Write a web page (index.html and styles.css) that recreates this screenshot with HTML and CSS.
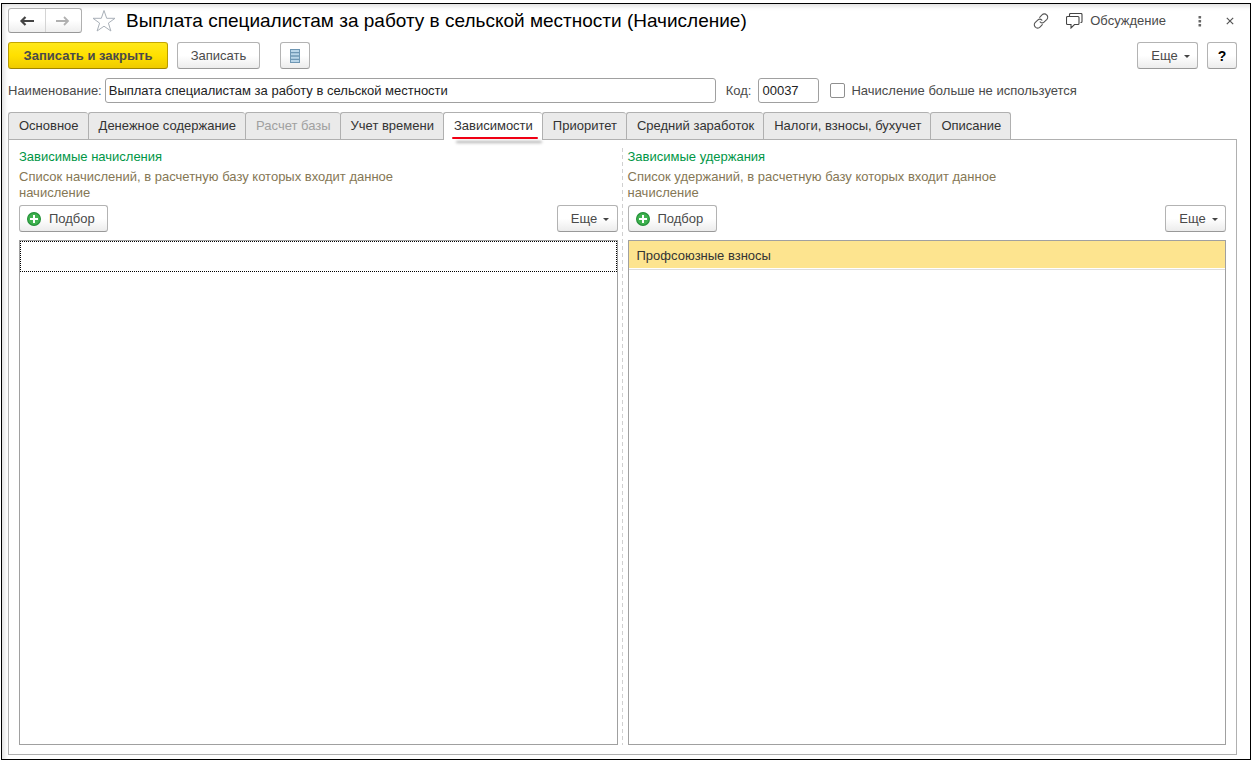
FILE: index.html
```html
<!DOCTYPE html>
<html lang="ru">
<head>
<meta charset="utf-8">
<title>Выплата специалистам за работу в сельской местности (Начисление)</title>
<link rel="stylesheet" href="styles.css">
</head>
<body>
<main class="window">
  <header class="titlebar">
    <div class="history">
      <button class="history-btn" type="button" aria-label="Назад"><svg width="16" height="12" viewBox="0 0 16 12"><path d="M15 6H3M6.500 2 2.500 6 6.500 10" fill="none" stroke="#444" stroke-width="2.200"/></svg></button>
      <button class="history-btn" type="button" aria-label="Вперед"><svg width="16" height="12" viewBox="0 0 16 12"><path d="M1 6h12M9 2 13 6 9 10" fill="none" stroke="#b0b0b0" stroke-width="1.800"/></svg></button>
    </div>
    <button class="icon-btn star" type="button" aria-label="В избранное"><svg width="24" height="24" viewBox="0 0 24 24"><path d="M12 1.500 14.700 9.300H23L16.400 14.100 18.900 22 12 17.200 5.100 22 7.600 14.100 1 9.300H9.300Z" fill="#fff" stroke="#a9b0b8"/></svg></button>
    <h1 class="title">Выплата специалистам за работу в сельской местности (Начисление)</h1>
    <button class="icon-btn link" type="button" aria-label="Получить ссылку"><svg width="16" height="16" viewBox="0 0 16 16" fill="none" stroke="#555" stroke-width="1.100" stroke-linecap="round"><path d="M6.700 4.300 9 2a3 3 0 0 1 4.700 0 3 3 0 0 1 .2 4.300L11.300 8.900a3 3 0 0 1-4.200 0"/><path d="M9.300 11.700 7 14a3 3 0 0 1-4.700 0 3 3 0 0 1-.2-4.300L4.700 7.100a3 3 0 0 1 4.200 0"/></svg></button>
    <button class="icon-btn discuss" type="button"><svg width="17" height="16" viewBox="0 0 17 16" fill="none" stroke="#444" stroke-width="1.100"><path d="M3.500 3V1.500q0-1 1-1h10.500q1 0 1 1v7q0 1-1 1H14.500"/><path d="M1.500 3.500h10.500q1 0 1 1v6q0 1-1 1H8.500L5 15V11.500H1.500q-1 0-1-1v-6q0-1 1-1Z"/></svg>Обсуждение</button>
    <button class="icon-btn dots" type="button" aria-label="Дополнительно"><svg width="4" height="13" viewBox="0 0 4 13" fill="#666"><rect x=".5" y="2" width="2.600" height="2.600" rx=".6"/><rect x=".5" y="6" width="2.600" height="2.600" rx=".6"/><rect x=".5" y="10" width="2.600" height="2.600" rx=".6"/></svg></button>
    <button class="icon-btn" type="button" aria-label="Закрыть"><svg width="8" height="8" viewBox="0 0 8 8"><path d="m.8.8 6.400 6.400M7.200.8.8 7.200" stroke="#555" stroke-width="1.200"/></svg></button>
  </header>

  <div class="commands">
    <button class="btn primary" type="button">Записать и закрыть</button>
    <button class="btn save" type="button">Записать</button>
    <button class="btn square list-btn" type="button" aria-label="Список"><svg width="10" height="14" viewBox="0 0 10 14"><path d="M0 0h10v14H0z" fill="#6f97b4"/><path d="M1 2h8M1 5.300h8M1 8.700h8M1 12h8" stroke="#b9d5e8" stroke-width="2"/></svg></button>
    <button class="btn more" type="button">Еще<span class="caret"></span></button>
    <button class="btn square help" type="button">?</button>
  </div>

  <form class="fields">
    <label for="name">Наименование:</label>
    <input class="text name" id="name" type="text" value="Выплата специалистам за работу в сельской местности">
    <label class="code-label" for="code">Код:</label>
    <input class="text code" id="code" type="text" value="00037">
    <input class="check" id="unused" type="checkbox">
    <label for="unused">Начисление больше не используется</label>
  </form>

  <nav class="tabs" role="tablist">
    <button class="tab" role="tab" type="button">Основное</button>
    <button class="tab" role="tab" type="button">Денежное содержание</button>
    <button class="tab" role="tab" type="button" disabled>Расчет базы</button>
    <button class="tab" role="tab" type="button">Учет времени</button>
    <button class="tab active" role="tab" type="button" aria-selected="true">Зависимости</button>
    <button class="tab" role="tab" type="button">Приоритет</button>
    <button class="tab" role="tab" type="button">Средний заработок</button>
    <button class="tab" role="tab" type="button">Налоги, взносы, бухучет</button>
    <button class="tab" role="tab" type="button">Описание</button>
  </nav>

  <div class="panel" role="tabpanel">
    <section class="column">
      <h2 class="heading">Зависимые начисления</h2>
      <p class="hint">Список начислений, в расчетную базу которых входит данное начисление</p>
      <div class="toolbar">
        <button class="btn pick" type="button"><svg width="14" height="14" viewBox="0 0 14 14"><circle cx="7" cy="7" r="6.400" fill="#3fb24f" stroke="#25913a" stroke-width="1.200"/><path d="M7 3v8M3 7h8" stroke="#fff" stroke-width="2"/></svg>Подбор</button>
        <button class="btn more" type="button">Еще<span class="caret"></span></button>
      </div>
      <div class="list" role="listbox" aria-label="Зависимые начисления">
        <div class="row focused" role="option"></div>
      </div>
    </section>
    <div class="splitter"></div>
    <section class="column">
      <h2 class="heading">Зависимые удержания</h2>
      <p class="hint">Список удержаний, в расчетную базу которых входит данное начисление</p>
      <div class="toolbar">
        <button class="btn pick" type="button"><svg width="14" height="14" viewBox="0 0 14 14"><circle cx="7" cy="7" r="6.400" fill="#3fb24f" stroke="#25913a" stroke-width="1.200"/><path d="M7 3v8M3 7h8" stroke="#fff" stroke-width="2"/></svg>Подбор</button>
        <button class="btn more" type="button">Еще<span class="caret"></span></button>
      </div>
      <div class="list" role="listbox" aria-label="Зависимые удержания">
        <div class="row selected" role="option" aria-selected="true">Профсоюзные взносы</div>
      </div>
    </section>
  </div>
</main>
</body>
</html>
```
FILE: styles.css
```css
* { box-sizing: border-box; }

body {
  margin: 0;
  padding: 3px 0 0 1px;
  min-height: 100vh;
  display: flex;
  background: #fff;
  color: #4a4a4a;
  font: 13px/16px "Liberation Sans", Arial, sans-serif;
}

button, input { font: inherit; color: inherit; margin: 0; }
button { padding: 0; cursor: pointer; }
svg { display: block; flex: none; }

.window {
  flex: 1;
  min-width: 0;
  display: flex;
  flex-direction: column;
  border: 1px solid #000;
  padding: 4px 13px 4px 6px;
  box-shadow: inset 5px 5px 5px -3px #dcdcdc;
}

/* Title bar */
.titlebar { display: flex; align-items: center; height: 25px; }
.history {
  display: flex;
  width: 74px;
  height: 25px;
  border: 1px solid #b0b0b0;
  border-bottom-color: #989898;
  border-radius: 3px;
  background: linear-gradient(#fff 50%, #eee);
}
.history-btn {
  flex: 1;
  display: flex;
  align-items: center;
  justify-content: center;
  border: 0;
  background: none;
}
.history-btn + .history-btn { border-left: 1px solid #d4d4d4; }
.icon-btn { display: flex; align-items: center; border: 0; background: none; }
.star { margin-left: 10px; }
.title {
  flex: 1;
  margin: 0 0 0 10px;
  color: #000;
  font-size: 19px;
  line-height: 24px;
  font-weight: 400;
  white-space: nowrap;
}
.discuss { gap: 7px; margin-left: 17px; }
.dots { margin: 0 24px 0 32px; }
.titlebar .icon-btn:last-child { margin-right: 3px; }

/* Buttons */
.btn {
  display: flex;
  align-items: center;
  justify-content: center;
  height: 27px;
  border: 1px solid #b3b3b3;
  border-bottom-color: #999;
  border-radius: 3px;
  background: linear-gradient(#fff 50%, #ececec);
  white-space: nowrap;
}
.primary {
  width: 160px;
  border-color: #c4a600 #b89c00 #a08600;
  background: linear-gradient(#ffe81a, #ffe000 50%, #efcb00);
  font-weight: 700;
}
.save { width: 83px; }
.square { width: 30px; }
.more { width: 61px; gap: 6px; padding-left: 6px; }
.pick { width: 89px; gap: 8px; padding-left: 7px; justify-content: flex-start; }
.help { color: #000; font-size: 14px; font-weight: 700; }
.caret { border: solid transparent; border-width: 3px 3px 0; border-top-color: #444; margin-top: 2px; }

.commands { display: flex; gap: 9px; margin-top: 9px; }
.list-btn { margin-left: 11px; }
.commands .more { margin-left: auto; }

/* Fields */
.fields { display: flex; align-items: center; height: 25px; margin-top: 9px; white-space: nowrap; }
.text {
  height: 25px;
  padding: 0 3px;
  border: 1px solid #a0a0a0;
  border-radius: 3px;
  background: #fff;
  color: #222;
}
.name { flex: 0 1 611px; min-width: 0; margin-left: 3px; }
.code-label { margin-left: 10px; }
.code { width: 61px; margin-left: 7px; }
.check {
  appearance: none;
  width: 15px;
  height: 15px;
  margin: 0 6px 0 11px;
  border: 1px solid #8f8f8f;
  border-radius: 2px;
  background: #fff;
}
.check:checked { background: #777; }

/* Tabs */
.tabs { display: flex; margin-top: 9px; }
.tab {
  position: relative;
  height: 27px;
  padding: 0 9px 0 10px;
  border: 1px solid #b0b0b0;
  border-width: 1px 0 0 1px;
  border-radius: 3px 3px 0 0;
  background: #eaeaea;
  color: #333;
  white-space: nowrap;
}
.tab:last-child { border-right-width: 1px; }
.tab:disabled { color: #a0a0a0; }
.tab.active { z-index: 1; height: 28px; margin-bottom: -1px; background: #fff; padding-bottom: 1px; }
.tab.active::after {
  content: "";
  position: absolute;
  left: 8px;
  right: 4px;
  bottom: 1px;
  height: 2px;
  border-radius: 1px;
  background: #f00014;
  box-shadow: 4px 4px 3px #aaa;
}

/* Panel */
.panel {
  flex: 1;
  display: flex;
  gap: 4px;
  padding: 8px 10px 9px;
  border: 1px solid #b0b0b0;
}
.column { flex: 1 1 0; min-width: 0; display: flex; flex-direction: column; }
.heading { margin: 0; color: #009646; font-size: 13px; line-height: 18px; font-weight: 400; }
.hint { max-width: 400px; margin: 3px 0 0; color: #857755; }
.toolbar { display: flex; justify-content: space-between; margin-top: 4px; }
.list { flex: 1; margin-top: 8px; border: 1px solid #a0a0a0; background: #fff; }
.row { color: #333; }
.focused { height: 31px; border: 1px dotted #000; }
.selected { padding: 7px 8px 4px; background: #fde48f; box-shadow: 0 1px #fff, 0 2px #ddd; }
.splitter {
  width: 1px;
  margin-right: 1px;
  background: repeating-linear-gradient(#d0d0d0 0 4px, transparent 4px 7px);
}
```
